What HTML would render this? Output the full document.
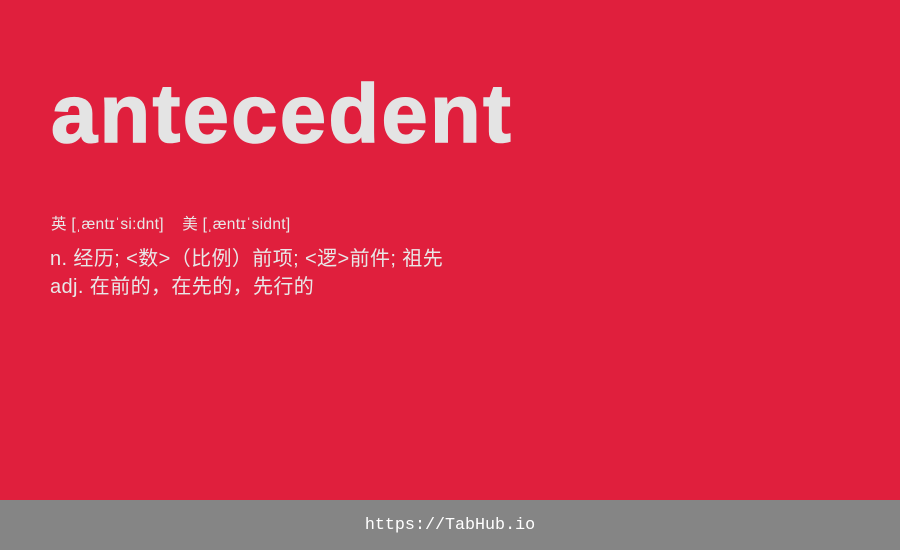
<!DOCTYPE html>
<html><head><meta charset="utf-8"><style>
body{margin:0;width:900px;height:550px;background:#e01f3d;position:relative;overflow:hidden;font-family:"Liberation Sans","Noto Sans CJK SC",sans-serif;color:#e8e8e8}
.w{position:absolute;left:51px;top:64px;font-size:83px;font-weight:bold;letter-spacing:2.4px;color:#e4e4e4;line-height:100px;-webkit-text-stroke:1.6px #e4e4e4}
.p{position:absolute;left:51px;top:212px;font-size:15.5px;white-space:pre;letter-spacing:0.3px}
.d{position:absolute;left:50px;top:245px;font-size:20px;line-height:28px;white-space:pre;letter-spacing:0.4px}
.f{position:absolute;left:0;top:500px;width:900px;height:50px;background:#858585;color:#fff;font-family:"Liberation Mono",monospace;font-size:16.7px;text-align:center;line-height:50px;overflow:hidden}
.f span{position:relative;top:1px}
</style></head><body>
<div class="w">antecedent</div>
<div class="p">英 [ˌæntɪˈsi:dnt]    美 [ˌæntɪˈsidnt]</div>
<div class="d">n. 经历; &lt;数&gt;（比例）前项; &lt;逻&gt;前件; 祖先
adj. 在前的，在先的，先行的</div>
<div class="f"><span>https://TabHub.io</span></div>
</body></html>
